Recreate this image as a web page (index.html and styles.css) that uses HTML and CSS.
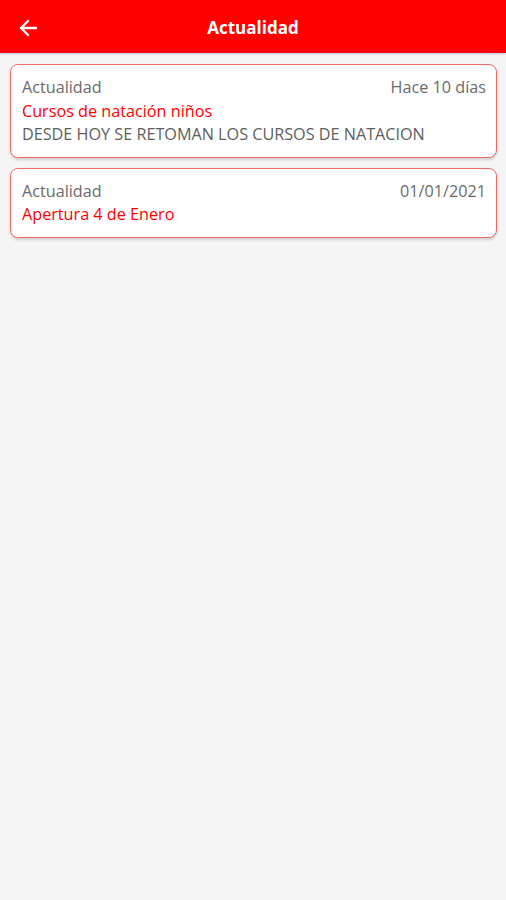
FILE: index.html
```html
<!DOCTYPE html>
<html lang="es">
<head>
  <meta charset="UTF-8">
  <title>Actualidad</title>
  <meta name="viewport" content="width=device-width, initial-scale=1.0">
  <link rel="stylesheet" href="styles.css">
</head>
<body>
  <div id="topbar">
    <button class="back-btn" aria-label="Volver">
      <svg width="20" height="20" viewBox="0 0 20 20" fill="none" stroke="#fff" stroke-width="2.4" stroke-linecap="round" stroke-linejoin="round">
        <path d="M18 10H3"/>
        <path d="M10 3L3 10L10 17"/>
      </svg>
    </button>
    <h1>Actualidad</h1>
  </div>

  <div id="newsList">
    <div class="news-card">
      <div class="news-head">
        <span class="news-cat">Actualidad</span>
        <span class="news-date">Hace 10 días</span>
      </div>
      <div class="news-title">Cursos de natación niños</div>
      <div class="news-body">DESDE HOY SE RETOMAN LOS CURSOS DE NATACION</div>
    </div>
    <div class="news-card">
      <div class="news-head">
        <span class="news-cat">Actualidad</span>
        <span class="news-date">01/01/2021</span>
      </div>
      <div class="news-title">Apertura 4 de Enero</div>
    </div>
  </div>
</body>
</html>
```

FILE: styles.css
```css
:root {
  --red: #ff0000;
  --bg: #f5f5f5;
  --muted: #6b6b6b;
  --border: #f06a6a;
}

body {
  margin: 0;
  font-family: 'Open Sans', 'Noto Sans', sans-serif;
  background: var(--bg);
  height: 100vh;
}

#topbar {
  height: 53px;
  background: var(--red);
  display: flex;
  align-items: center;
  position: relative;
  box-shadow: 0 1px 2px rgba(0, 0, 0, 0.2);
}

.back-btn {
  background: none;
  border: none;
  padding: 0;
  margin-left: 17px;
  margin-top: 2px;
  width: 22px;
  height: 22px;
  display: flex;
  align-items: center;
  justify-content: center;
  cursor: pointer;
}

#topbar h1 {
  position: absolute;
  left: 0;
  right: 0;
  top: 16px;
  text-align: center;
  margin: 0;
  font-size: 17px;
  line-height: 24px;
  font-weight: 700;
  color: #fff;
  pointer-events: none;
}

#newsList {
  padding: 11px 9px 0 10px;
  display: flex;
  flex-direction: column;
  gap: 10px;
}

.news-card {
  background: #fff;
  border: 1px solid var(--border);
  border-radius: 8px;
  padding: 11px 10px 10px 11px;
  box-shadow: 0 2px 3px rgba(0, 0, 0, 0.15);
  font-size: 16.2px;
  line-height: 23.5px;
}

.news-head {
  display: flex;
  justify-content: space-between;
  color: var(--muted);
}

.news-title {
  color: var(--red);
}

.news-body {
  color: #5e5e5e;
}
```
